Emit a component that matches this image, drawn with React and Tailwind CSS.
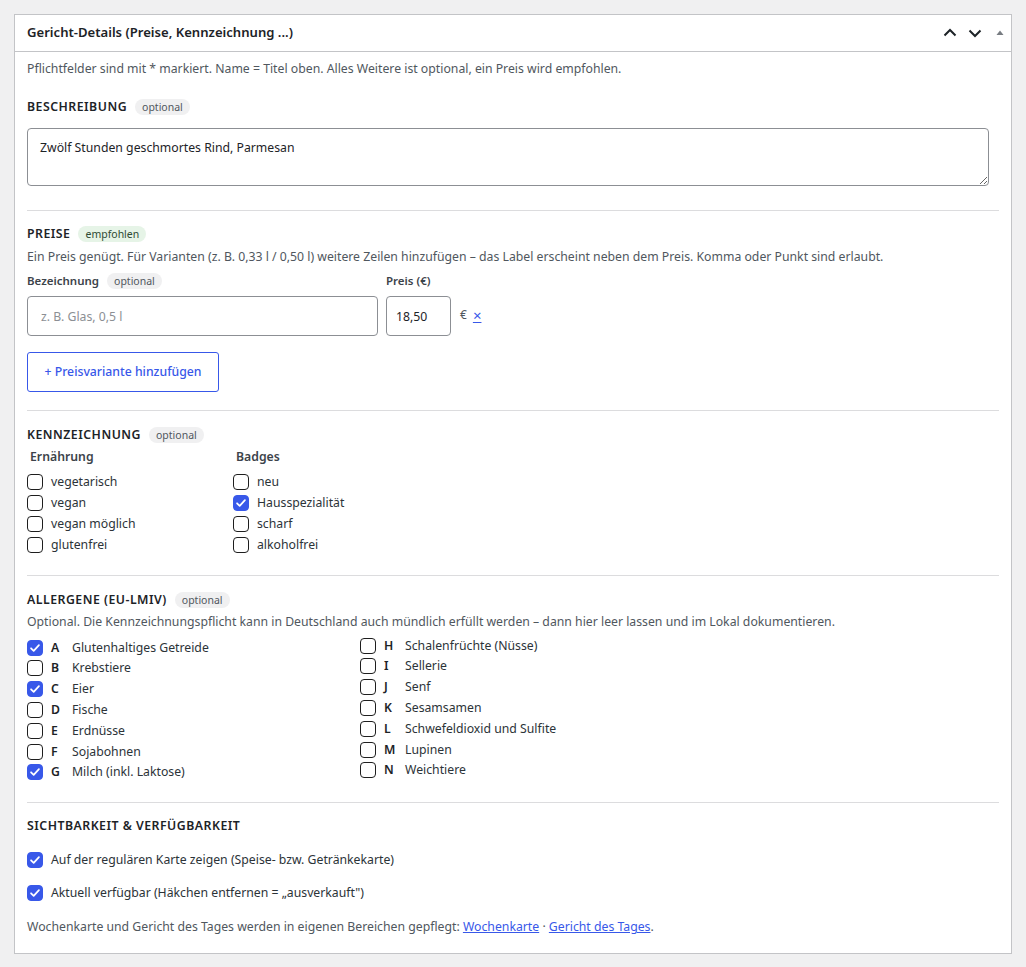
import { useState } from 'react'

const FONT = "font-['Noto_Sans',sans-serif]"

const DIET = ['vegetarisch', 'vegan', 'vegan möglich', 'glutenfrei']
const BADGES = ['neu', 'Hausspezialität', 'scharf', 'alkoholfrei']

const ALLERGENS_LEFT = [
  ['A', 'Glutenhaltiges Getreide'],
  ['B', 'Krebstiere'],
  ['C', 'Eier'],
  ['D', 'Fische'],
  ['E', 'Erdnüsse'],
  ['F', 'Sojabohnen'],
  ['G', 'Milch (inkl. Laktose)'],
]
const ALLERGENS_RIGHT = [
  ['H', 'Schalenfrüchte (Nüsse)'],
  ['I', 'Sellerie'],
  ['J', 'Senf'],
  ['K', 'Sesamsamen'],
  ['L', 'Schwefeldioxid und Sulfite'],
  ['M', 'Lupinen'],
  ['N', 'Weichtiere'],
]

function Pill({ children, tone = 'gray' }) {
  return (
    <span
      className={`ml-2 inline-block rounded-full px-[7px] text-[10.5px] leading-[16px] font-normal normal-case tracking-normal ${
        tone === 'green'
          ? 'bg-[#e6f4e7] text-[#2e4a33]'
          : 'bg-[#f0f0f1] text-[#50575e]'
      }`}
    >
      {children}
    </span>
  )
}

function SectionTitle({ children, pill, tone }) {
  return (
    <div className="flex items-center h-[18px] text-[12.3px] font-semibold uppercase tracking-[0.04em] text-[#1d2327]">
      {children}
      {pill && <Pill tone={tone}>{pill}</Pill>}
    </div>
  )
}

function Checkbox({ checked, onChange }) {
  return (
    <button
      type="button"
      onClick={onChange}
      aria-pressed={checked}
      className={`w-4 h-4 shrink-0 rounded-[4px] grid place-items-center ${
        checked ? 'bg-[#3858e9] border border-[#3858e9]' : 'bg-white border border-[#1e1e1e]'
      }`}
    >
      {checked && (
        <svg viewBox="0 0 16 16" className="w-[14px] h-[14px]">
          <path
            d="M3.5 8.3l3 3 6-6.6"
            fill="none"
            stroke="white"
            strokeWidth="2"
            strokeLinecap="round"
            strokeLinejoin="round"
          />
        </svg>
      )}
    </button>
  )
}

function useChecks(initial) {
  const [set, setSet] = useState(new Set(initial))
  const toggle = (k) =>
    setSet((prev) => {
      const next = new Set(prev)
      next.has(k) ? next.delete(k) : next.add(k)
      return next
    })
  return [set, toggle]
}

function CheckRow({ checked, onToggle, children }) {
  return (
    <label className="flex items-center gap-2 h-[20.8px] text-[12.25px] text-[#2c3338]">
      <Checkbox checked={checked} onChange={onToggle} />
      {children}
    </label>
  )
}

function AllergenColumn({ items, checks, toggle, className = '' }) {
  return (
    <div className={`flex flex-col ${className}`}>
      {items.map(([code, name]) => (
        <CheckRow key={code} checked={checks.has(code)} onToggle={() => toggle(code)}>
          <span className="w-[13px] font-semibold text-[#1d2327]">{code}</span>
          <span>{name}</span>
        </CheckRow>
      ))}
    </div>
  )
}

function HeaderIcons() {
  return (
    <div className="flex items-center gap-[9px] text-[#1d2327]">
      <svg viewBox="0 0 16 16" className="w-4 h-4">
        <path d="M2.5 10.5L8 5l5.5 5.5" fill="none" stroke="currentColor" strokeWidth="2" />
      </svg>
      <svg viewBox="0 0 16 16" className="w-4 h-4">
        <path d="M2.5 5.5L8 11l5.5-5.5" fill="none" stroke="currentColor" strokeWidth="2" />
      </svg>
      <svg viewBox="0 0 16 16" className="w-4 h-4">
        <path d="M4.5 10L8 5.5l3.5 4.5z" fill="#787c82" />
      </svg>
    </div>
  )
}

export default function App() {
  const [diet, toggleDiet] = useChecks([])
  const [badges, toggleBadge] = useChecks(['Hausspezialität'])
  const [allergens, toggleAllergen] = useChecks(['A', 'C', 'G'])
  const [vis, toggleVis] = useChecks(['regular', 'available'])

  return (
    <div className={`min-h-screen bg-[#f0f0f1] p-[14px] ${FONT}`}>
      <div className="w-[998px] border border-[#c3c4c7] bg-white">
        <div className="h-[37px] flex items-center justify-between pl-[12px] pr-[3px] border-b border-[#c3c4c7]">
          <h2 className="text-[13.1px] font-semibold text-[#1d2327]">
            Gericht-Details (Preise, Kennzeichnung ...)
          </h2>
          <HeaderIcons />
        </div>

        <div className="px-[12px] text-[12.25px] text-[#1d2327] leading-[18px]">
          <p className="pt-[8px] text-[#50575e]">
            Pflichtfelder sind mit * markiert. Name = Titel oben. Alles Weitere ist optional, ein Preis wird empfohlen.
          </p>

          {/* Beschreibung */}
          <div className="pt-[20px] pb-[24px]">
            <SectionTitle pill="optional">Beschreibung</SectionTitle>
            <textarea
              rows={2}
              defaultValue="Zwölf Stunden geschmortes Rind, Parmesan"
              className="mt-[12px] block w-[99%] h-[58px] rounded-[4px] border border-[#8c8f94] px-[12px] pt-[10px] text-[12.25px] text-[#1d2327] leading-[18px]"
            />
          </div>

          {/* Preise */}
          <div className="border-t border-[#dcdcde] pt-[14px] pb-[18px]">
            <SectionTitle pill="empfohlen" tone="green">Preise</SectionTitle>
            <p className="mt-[5px] text-[#50575e]">
              Ein Preis genügt. Für Varianten (z. B. 0,33 l / 0,50 l) weitere Zeilen hinzufügen – das Label erscheint neben dem Preis. Komma oder Punkt sind erlaubt.
            </p>
            <div className="mt-[6px] flex items-end gap-[8px]">
              <div className="flex flex-col">
                <span className="flex items-center h-[18px] text-[11.5px] font-semibold text-[#3c434a]">
                  Bezeichnung <Pill>optional</Pill>
                </span>
                <input
                  placeholder="z. B. Glas, 0,5 l"
                  className="mt-[6px] w-[351px] h-[40px] rounded-[4px] border border-[#8c8f94] px-[13px] text-[12.25px] placeholder:text-[#8c8f94]"
                />
              </div>
              <div className="flex flex-col">
                <span className="h-[18px] text-[11.5px] font-semibold text-[#3c434a]">Preis (€)</span>
                <input
                  defaultValue="18,50"
                  className="mt-[6px] w-[65px] h-[40px] rounded-[4px] border border-[#8c8f94] px-[9px] text-[12.25px] text-[#1d2327]"
                />
              </div>
              <div className="h-[40px] flex items-center gap-[6px] pl-[1px] -translate-y-[1px]">
                <span className="text-[12px] text-[#50575e]">€</span>
                <a href="#" className="text-[15px] text-[#3858e9] underline">×</a>
              </div>
            </div>
            <button
              type="button"
              className="mt-[16px] w-[192px] h-[40px] rounded-[3px] border border-[#3858e9] text-[12.25px] font-medium text-[#3858e9]"
            >
              + Preisvariante hinzufügen
            </button>
          </div>

          {/* Kennzeichnung */}
          <div className="border-t border-[#dcdcde] pt-[15px] pb-[20px]">
            <SectionTitle pill="optional">Kennzeichnung</SectionTitle>
            <div className="mt-[4px] flex">
              <div className="w-[206px]">
                <div className="pl-[3px] font-semibold text-[#3c434a]">Ernährung</div>
                <div className="mt-[6px] flex flex-col">
                  {DIET.map((d) => (
                    <CheckRow key={d} checked={diet.has(d)} onToggle={() => toggleDiet(d)}>
                      {d}
                    </CheckRow>
                  ))}
                </div>
              </div>
              <div>
                <div className="pl-[3px] font-semibold text-[#3c434a]">Badges</div>
                <div className="mt-[6px] flex flex-col">
                  {BADGES.map((b) => (
                    <CheckRow key={b} checked={badges.has(b)} onToggle={() => toggleBadge(b)}>
                      {b}
                    </CheckRow>
                  ))}
                </div>
              </div>
            </div>
          </div>

          {/* Allergene */}
          <div className="border-t border-[#dcdcde] pt-[15px] pb-[19px]">
            <SectionTitle pill="optional">Allergene (EU-LMIV)</SectionTitle>
            <p className="mt-[4px] text-[#50575e]">
              Optional. Die Kennzeichnungspflicht kann in Deutschland auch mündlich erfüllt werden – dann hier leer lassen und im Lokal dokumentieren.
            </p>
            <div className="mt-[4px] flex">
              <AllergenColumn
                items={ALLERGENS_LEFT}
                checks={allergens}
                toggle={toggleAllergen}
                className="w-[333px] pt-[2px]"
              />
              <AllergenColumn items={ALLERGENS_RIGHT} checks={allergens} toggle={toggleAllergen} />
            </div>
          </div>

          {/* Sichtbarkeit */}
          <div className="border-t border-[#dcdcde] pt-[14px] pb-[17px]">
            <SectionTitle>Sichtbarkeit &amp; Verfügbarkeit</SectionTitle>
            <div className="mt-[15px] flex flex-col gap-[12px]">
              <CheckRow checked={vis.has('regular')} onToggle={() => toggleVis('regular')}>
                Auf der regulären Karte zeigen (Speise- bzw. Getränkekarte)
              </CheckRow>
              <CheckRow checked={vis.has('available')} onToggle={() => toggleVis('available')}>
                Aktuell verfügbar (Häkchen entfernen = „ausverkauft")
              </CheckRow>
            </div>
            <p className="mt-[15px] text-[#50575e]">
              Wochenkarte und Gericht des Tages werden in eigenen Bereichen gepflegt:{' '}
              <a href="#" className="text-[#3858e9] underline">Wochenkarte</a> ·{' '}
              <a href="#" className="text-[#3858e9] underline">Gericht des Tages</a>.
            </p>
          </div>
        </div>
      </div>
    </div>
  )
}
